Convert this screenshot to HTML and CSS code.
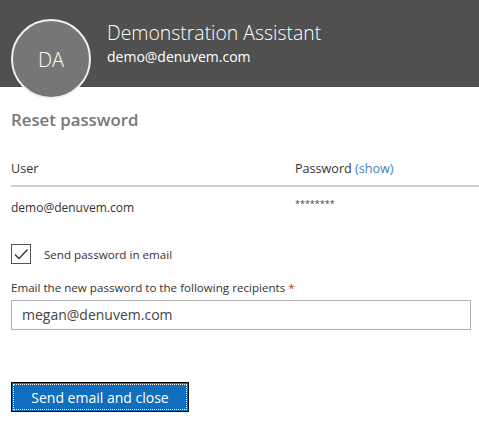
FILE: index.html
```html
<!DOCTYPE html>
<html>
<head>
    <meta charset="UTF-8">
    <title>Reset password</title>
    <link rel="stylesheet" href="styles.css">
</head>
<body>
    <div class="header">
        <div class="avatar">DA</div>
        <div class="who">
            <div class="name">Demonstration Assistant</div>
            <div class="mail">demo@denuvem.com</div>
        </div>
    </div>
    <div class="panel">
        <h2 class="title">Reset password</h2>
        <div class="row head">
            <div class="col_user">User</div>
            <div class="col_pass">Password <a href="#" class="show">(show)</a></div>
        </div>
        <div class="row data">
            <div class="col_user">demo@denuvem.com</div>
            <div class="col_pass stars">********</div>
        </div>
        <label class="check">
            <span class="box">
                <svg width="18" height="18" viewBox="0 0 18 18"><path d="M3 9.5 L7 13.5 L15.5 4.5" fill="none" stroke="#333" stroke-width="1.3"/></svg>
            </span>
            <span>Send password in email</span>
        </label>
        <div class="field_label">Email the new password to the following recipients <span class="req">*</span></div>
        <div class="input">megan@denuvem.com</div>
        <div class="actions">
            <button class="btn">Send email and close</button>
        </div>
    </div>
</body>
</html>
```

FILE: styles.css
```css
body{
    margin:0;
    background:#fff;
    font-family:"Open Sans", "Noto Sans", sans-serif;
    color:#333;
}
.header{
    height:87px;
    background:#505050;
    display:flex;
    padding-left:11px;
    box-sizing:border-box;
}
.avatar{
    width:76px;
    height:76px;
    margin-top:19px;
    border:2px solid #f0f0f0;
    border-radius:50%;
    background:#767676;
    color:#fff;
    font-size:20px;
    font-weight:300;
    display:flex;
    align-items:center;
    justify-content:center;
    flex:none;
}
.who{
    margin-left:16px;
    padding-top:19px;
    color:#fff;
}
.name{
    font-size:19.4px;
    font-weight:300;
    line-height:28px;
}
.mail{
    font-size:14px;
    line-height:20px;
}
.panel{
    padding:0 0 0 11px;
}
.title{
    margin:21px 0 0;
    font-size:16.8px;
    font-weight:600;
    color:#777;
    line-height:24px;
}
.row{
    display:flex;
    font-size:12.6px;
}
.row.head{
    margin-top:28px;
    padding-bottom:8px;
    border-bottom:2px solid #d0d0d0;
}
.row.data{
    padding-top:12px;
    font-size:12px;
}
.col_user{
    width:284px;
}
.show{
    color:#3a7fc1;
    text-decoration:none;
}
.stars{
    font-size:9px;
    color:#444;
    margin-top:-2px;
}
.check{
    display:flex;
    align-items:center;
    margin-top:28px;
    font-size:11.6px;
}
.box{
    width:18px;
    height:18px;
    border:1px solid #555;
    margin-right:13px;
    display:flex;
}
.field_label{
    margin-top:16px;
    font-size:11.6px;
}
.req{
    color:#c33;
}
.input{
    height:28px;
    margin-top:5px;
    border:1px solid #b0b0b0;
    font-size:14px;
    line-height:28px;
    padding-left:10px;
    width:448px;
    color:#444;
}
.actions{
    margin-top:52px;
}
.btn{
    width:178px;
    height:30px;
    background:#106ebe;
    border:1px solid #000;
    outline:1px dotted #fff;
    outline-offset:-3px;
    color:#fff;
    font-family:inherit;
    font-size:14px;
    padding:0;
}
```
